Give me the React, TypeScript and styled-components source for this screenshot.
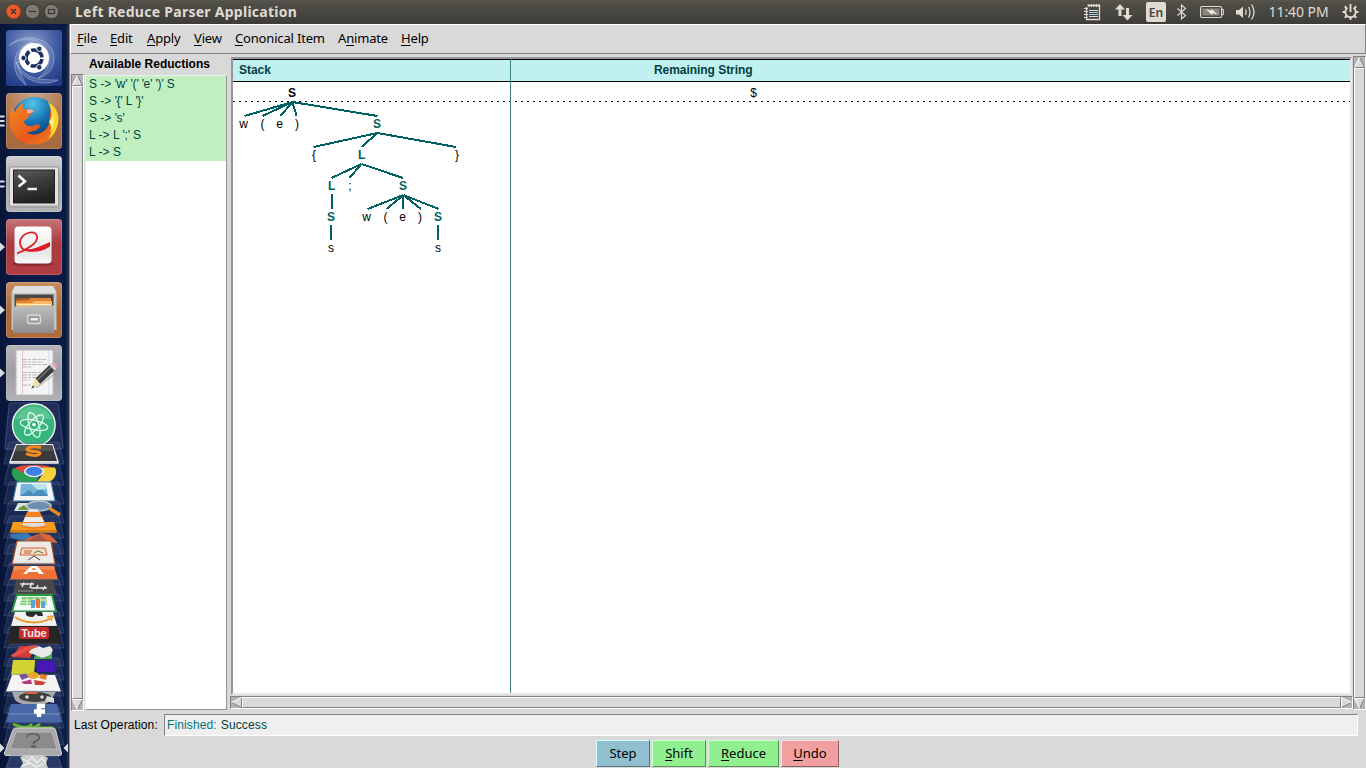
import React from 'react';
import styled, { createGlobalStyle, css } from 'styled-components';

const GlobalStyle = createGlobalStyle`
  * { box-sizing: border-box; }
  html, body { margin: 0; padding: 0; overflow: hidden; }
  body { background: #d9d9d9; }
`;

const helvetica = '"Liberation Sans", Arial, sans-serif';
const uiFont = '"Noto Sans", sans-serif';

const Desktop = styled.div`
  width: 1366px;
  height: 768px;
  display: flex;
  flex-direction: column;
  overflow: hidden;
  background: #d9d9d9;
`;

/* ---------- top panel ---------- */

const TopPanel = styled.header`
  height: 24px;
  flex: none;
  display: flex;
  align-items: center;
  background: linear-gradient(#5a5850 0, #504f48 2px, #3d3c38 100%);
  color: #dfdbd2;
`;

const WindowButtons = styled.div`
  display: flex;
  gap: 3px;
  padding: 0 0 2px 5px;
  width: 75px;
`;

const Title = styled.div`
  flex: 1;
  font: bold 14px/24px ${uiFont};
  letter-spacing: 0.27px;
  white-space: nowrap;
`;

const Indicator = styled.div<{ $w: number; $gap: number }>`
  width: ${(p) => p.$w}px;
  margin-right: ${(p) => p.$gap}px;
  height: 24px;
  flex: none;
  svg { display: block; }
`;

const Language = styled.div`
  width: 20px;
  height: 20px;
  margin-right: 11px;
  border-radius: 2px;
  background: #dfdbd2;
  color: #45443f;
  font: 600 12px/21px ${uiFont};
  text-align: center;
`;

const Clock = styled.div`
  width: 61px;
  margin-right: 12px;
  font: 14px/24px ${uiFont};
  letter-spacing: -0.05px;
  text-indent: -0.5px;
  white-space: nowrap;
`;

/* ---------- launcher ---------- */

const Workspace = styled.div`
  flex: 1;
  display: flex;
  min-height: 0;
`;

const Launcher = styled.nav`
  width: 69px;
  flex: none;
  display: flex;
  flex-direction: column;
  background: linear-gradient(90deg, #081538 0, #0a1c4b 30%, #0a1b48 96%, #2a3248 98%, #23293a 100%);
`;

const Tiles = styled.div`
  display: flex;
  flex-direction: column;
  gap: 7px;
  padding-top: 6px;
`;

const TileRow = styled.div`
  display: flex;
  align-items: center;
  height: 56px;
`;

const Marks = styled.div`
  width: 6px;
  height: 56px;
  svg { display: block; }
`;

const Tile = styled.div<{ $bg: string }>`
  width: 56px;
  height: 56px;
  border-radius: 4px;
  overflow: hidden;
  background: ${(p) => p.$bg};
  box-shadow: inset 0 0 0 1px rgba(255, 255, 255, 0.16);
  svg { display: block; }
`;

/* ---------- application window ---------- */

const AppWindow = styled.main`
  flex: 1;
  display: flex;
  flex-direction: column;
  min-width: 0;
  border-left: 1px solid #8a8a8a;
  background: #d9d9d9;
`;

const MenuBar = styled.div`
  height: 30px;
  flex: none;
  display: flex;
  gap: 13px;
  padding-left: 6px;
  border: 1px solid #fff;
  border-right-color: #828282;
  border-bottom-color: #828282;
  font: 13px/26px ${uiFont};
  color: #000;
`;

const MenuItem = styled.span<{ $w: number }>`
  width: ${(p) => p.$w}px;
  white-space: nowrap;
  letter-spacing: -0.17px;
  u { text-underline-offset: 2px; text-decoration-thickness: 1px; }
`;

const Panes = styled.div`
  height: 657px;
  flex: none;
  display: flex;
  padding-top: 2px;
`;

const ReductionsPane = styled.section`
  width: 160px;
  flex: none;
  padding-left: 1px;
`;

const PaneTitle = styled.div`
  height: 18px;
  padding-left: 18px;
  font: bold 12px/16px ${helvetica};
  white-space: nowrap;
`;

const ListRow = styled.div`
  display: flex;
  gap: 1px;
`;

const ListBox = styled.div`
  width: 142px;
  height: 635px;
  margin-top: 1px;
  border: 1px solid #f0f0f0;
  border-right: 1px solid #969696;
  border-bottom: 1px solid #969696;
  background: #fff;
`;

const Reduction = styled.div`
  height: 17px;
  padding-left: 3px;
  background: #c0f0c0;
  color: #004040;
  font: 12px/17px ${helvetica};
  white-space: pre;
`;

const Quote = styled.span`
  letter-spacing: -0.4px;
`;

const ParserPane = styled.section`
  flex: 1;
  display: flex;
  min-width: 0;
`;

const CanvasColumn = styled.div`
  width: 1123px;
  display: flex;
  flex-direction: column;
`;

const Canvas = styled.div`
  height: 638px;
  margin: 1px;
  display: flex;
  background: #fff;
  border: 2px solid #969696;
  border-right-color: #e8e8e8;
  border-bottom-color: #e8e8e8;
`;

const CanvasPart = styled.div<{ $w?: number }>`
  ${(p) => (p.$w ? css`width: ${p.$w}px; flex: none; border-right: 1px solid #408080;` : css`flex: 1;`)}
  min-width: 0;
`;

const CanvasHeader = styled.div<{ $indent: number }>`
  height: 23px;
  padding-left: ${(p) => p.$indent}px;
  border-top: 1px solid #000;
  border-bottom: 1px solid #000;
  background: #c0f0f0;
  color: #004040;
  font: bold 12px/21px ${helvetica};
  letter-spacing: -0.05px;
  white-space: nowrap;
`;

const Drawing = styled.svg`
  display: block;
`;

const NodeText = styled.text<{ $kind?: 'root' | 'inner' }>`
  font-family: ${helvetica};
  font-size: 12px;
  font-weight: ${(p) => (p.$kind ? 'bold' : 'normal')};
  fill: ${(p) => (p.$kind === 'inner' ? '#006060' : '#000')};
  text-anchor: middle;
`;

/* ---------- scrollbars ---------- */

const Bar = styled.div<{ $vertical?: boolean; $length: number }>`
  display: flex;
  flex: none;
  flex-direction: ${(p) => (p.$vertical ? 'column' : 'row')};
  width: ${(p) => (p.$vertical ? 13 : p.$length)}px;
  height: ${(p) => (p.$vertical ? p.$length : 13)}px;
  background: #b3b3b3;
  border: 1px solid #828282;
  border-right-color: #fff;
  border-bottom-color: #fff;
  svg { display: block; flex: none; }
`;

const Thumb = styled.div`
  flex: 1;
  background: #d9d9d9;
  border: 1px solid #fff;
  border-right-color: #828282;
  border-bottom-color: #828282;
`;

/* ---------- bottom ---------- */

const StatusRow = styled.div`
  height: 25px;
  flex: none;
  display: flex;
  padding: 3px 8px 0 4px;
  font: 12px/23px ${helvetica};
  letter-spacing: 0.12px;
`;

const StatusLabel = styled.div`
  width: 90px;
  white-space: nowrap;
`;

const StatusField = styled.div`
  flex: 1;
  height: 22px;
  padding-left: 2px;
  background: #efefef;
  border: 1px solid #828282;
  border-right-color: #fff;
  border-bottom-color: #fff;
  color: #004040;
  line-height: 21px;
  span { color: #007878; margin-right: 0.6px; }
`;

const ButtonRow = styled.div`
  display: flex;
  gap: 2px;
  padding: 4px 0 0 526px;
`;

const Button = styled.div<{ $w: number; $bg: string; $light: string; $dark: string }>`
  width: ${(p) => p.$w}px;
  height: 27px;
  background: ${(p) => p.$bg};
  border: 1px solid ${(p) => p.$light};
  border-right-color: ${(p) => p.$dark};
  border-bottom-color: ${(p) => p.$dark};
  font: 13px/25px ${uiFont};
  text-align: center;
  color: #000;
  u { text-underline-offset: 2px; text-decoration-thickness: 1px; }
`;

type Dir = 'up' | 'down' | 'left' | 'right';

const Arrow = ({ dir }: { dir: Dir }) => {
  const shapes: Record<Dir, [string, string, string]> = {
    up: ['5.5,0.5 0.5,10.5 10.5,10.5', 'M5.5 .5L.5 10.5', 'M5.5 .5L10.5 10.5H.5'],
    down: ['5.5,10.5 0.5,.5 10.5,.5', 'M5.5 10.5L.5 .5H10.5', 'M10.5 .5L5.5 10.5'],
    left: ['0.5,5.5 10.5,.5 10.5,10.5', 'M10.5 .5L.5 5.5', 'M10.5 .5V10.5L.5 5.5'],
    right: ['10.5,5.5 .5,.5 .5,10.5', 'M.5 10.5V.5L10.5 5.5', 'M.5 10.5L10.5 5.5'],
  };
  const [body, light, dark] = shapes[dir];
  return (
    <svg width="11" height="11" viewBox="0 0 11 11">
      <polygon points={body} fill="#d9d9d9" />
      <path d={dark} fill="none" stroke="#828282" />
      <path d={light} fill="none" stroke="#fff" />
    </svg>
  );
};

const Scrollbar = ({ vertical, length }: { vertical?: boolean; length: number }) => (
  <Bar $vertical={vertical} $length={length}>
    <Arrow dir={vertical ? 'up' : 'left'} />
    <Thumb />
    <Arrow dir={vertical ? 'down' : 'right'} />
  </Bar>
);

/* ---------- parse tree ---------- */

const edges: [number, number, number, number][] = [
  [292.4, 102, 244.5, 116], [292.4, 102, 262.5, 116], [292.4, 102, 280.5, 116], [292.4, 102, 296.6, 116], [292.4, 102, 377.5, 116],
  [377.4, 133, 313.5, 147], [377.4, 133, 361.5, 147], [377.4, 133, 456, 147],
  [361.4, 164, 331.5, 178], [361.4, 164, 349.5, 178], [361.4, 164, 403, 178],
  [332, 194, 332, 209], [331, 225, 331, 240],
  [403.4, 195, 367.5, 209], [403.4, 195, 386.5, 209], [403, 195, 403, 209], [403.4, 195, 421, 209], [403.4, 195, 438.6, 209],
  [438, 225, 438, 240],
];

const nodes: [string, number, number, ('root' | 'inner')?][] = [
  ['S', 292, 97, 'root'],
  ['w', 243.5, 128], ['(', 262.5, 128], ['e', 279.5, 128], [')', 297, 128], ['S', 377, 128, 'inner'],
  ['{', 314, 159], ['L', 361.6, 159, 'inner'], ['}', 457, 159],
  ['L', 331.6, 190, 'inner'], [';', 350, 190], ['S', 403, 190, 'inner'],
  ['S', 331, 221, 'inner'], ['w', 366.5, 221], ['(', 385.5, 221], ['e', 402.5, 221], [')', 420, 221], ['S', 438, 221, 'inner'],
  ['s', 331, 252], ['s', 438, 252],
];

const ParseTree = () => (
  <Drawing width="277" height="180" viewBox="233 82 277 180">
    <path d="M233 101.5H510" stroke="#000" strokeDasharray="2 4" />
    <g stroke="#006060" strokeWidth="2" shapeRendering="crispEdges">
      {edges.map(([x1, y1, x2, y2], i) => <line key={i} x1={x1} y1={y1} x2={x2} y2={y2} />)}
    </g>
    {nodes.map(([t, x, y, kind], i) => <NodeText key={i} x={x} y={y} $kind={kind}>{t}</NodeText>)}
  </Drawing>
);

/* ---------- launcher icons ---------- */

const UbuntuIcon = () => (
  <svg width="56" height="56" viewBox="0 0 56 56">
    <defs>
      <radialGradient id="dash" cx=".45" cy=".25" r=".85">
        <stop offset="0" stopColor="#8a9cc8" /><stop offset=".55" stopColor="#3e5ba3" /><stop offset="1" stopColor="#213a85" />
      </radialGradient>
    </defs>
    <rect width="56" height="56" rx="4" fill="url(#dash)" />
    <g fill="#b9c7e6" fillOpacity=".22" stroke="#c4d0ea" strokeOpacity=".5" strokeWidth=".9">
      <path d="M3 16C14 3 44 5 48 25C49 38 42 46 32 48C44 40 45 28 41 20C34 8 15 6 3 16Z" />
      <path d="M20 55C3 43 5 16 27 12C14 18 10 28 13 38C15 46 18 51 20 55Z" />
      <path d="M52 50C37 58 13 50 10 31C15 43 24 48 34 49C42 50 48 50 52 50Z" />
    </g>
    <circle cx="28" cy="28" r="15" fill="#fff" />
    <circle cx="28" cy="28" r="8" fill="none" stroke="#1c2f62" strokeWidth="3.6" strokeDasharray="14.8 2" strokeDashoffset="-1" />
    <g fill="#1c2f62" stroke="#fff" strokeWidth=".9">
      <circle cx="17.5" cy="28" r="2.7" /><circle cx="33.3" cy="18.8" r="2.7" /><circle cx="33.3" cy="37.2" r="2.7" />
    </g>
  </svg>
);

const FirefoxIcon = () => (
  <svg width="56" height="56" viewBox="0 0 56 56">
    <defs>
      <radialGradient id="globe" cx=".45" cy=".15" r=".8">
        <stop offset="0" stopColor="#55c4e8" /><stop offset=".5" stopColor="#1673b5" /><stop offset="1" stopColor="#0b2e66" />
      </radialGradient>
      <linearGradient id="fox" x1="0" y1="0" x2="1" y2="1">
        <stop offset="0" stopColor="#f58a20" /><stop offset=".6" stopColor="#e8581b" /><stop offset="1" stopColor="#f08a1c" />
      </linearGradient>
    </defs>
    <circle cx="28.500" cy="27" r="23" fill="url(#globe)" />
    <path d="M45 11C53 18 54 30 49 40C42 52 25 55 13 47C4 40 1 28 6 15L9 19C10 16 13 12 17 10C16 13 17 15 19 17C23 15 27 17 28 18C27 20 24 21 23 23C22 26 18 27 18 29C20 34 25 34 29 32C33 31 35 32 34 34C30 39 24 38 21 40C31 44 41 39 43 30C44 22 45 16 45 11Z" fill="url(#fox)" />
    <path d="M42 9C51 14 55 24 51 34C49 40 46 43 42 46C47 38 47 34 44 31C47 23 45 15 42 9Z" fill="#fbd52b" />
    <path d="M47 21C49 27 48 34 44 40C46 34 45 31 43 29Z" fill="#fff07a" />
    <path d="M21 17C24 16 27 17 28 18C25 21 23 20 21 20Z" fill="#f5b19a" />
  </svg>
);

const TerminalIcon = () => (
  <svg width="56" height="56" viewBox="0 0 56 56">
    <defs>
      <linearGradient id="screen" x1="0" y1="0" x2="0.3" y2="1">
        <stop offset="0" stopColor="#5b5b5b" /><stop offset=".5" stopColor="#3b3b3b" /><stop offset="1" stopColor="#222" />
      </linearGradient>
    </defs>
    <rect x="3.500" y="11" width="49" height="40" rx="2" fill="#e3e3e3" stroke="#888" strokeWidth=".8" />
    <rect x="7.500" y="14" width="41" height="33" fill="url(#screen)" stroke="#202020" />
    <path d="M12.500 19.500L19 25.500L12.500 30.500" fill="none" stroke="#fff" strokeWidth="2.500" />
    <path d="M21.500 33H31" stroke="#eee" strokeWidth="2.300" />
    <path d="M5 50H51" stroke="#999" />
  </svg>
);

const PdfIcon = () => (
  <svg width="56" height="56" viewBox="0 0 56 56">
    <defs><linearGradient id="pdfpage" x1="0" y1="0" x2="0" y2="1"><stop offset="0" stopColor="#fff" /><stop offset=".7" stopColor="#e6e6e6" /><stop offset="1" stopColor="#fafafa" /></linearGradient></defs>
    <ellipse cx="27" cy="45" rx="21" ry="2" fill="#6d1f24" opacity=".6" />
    <rect x="8.500" y="7.500" width="37" height="37" rx="4" fill="url(#pdfpage)" />
    <path d="M11 34.500C20 31 33 24 31 17C29 10 15 14 14 23C14 34 26 34 44 25" fill="none" stroke="#d81e26" strokeWidth="1.800" />
    <path d="M18 30C25 32 35 27 44 23V27.500C36 33 24 35 18 30Z" fill="#d81e26" />
  </svg>
);

const FilesIcon = () => (
  <svg width="56" height="56" viewBox="0 0 56 56">
    <defs><linearGradient id="drawer" x1="0" y1="0" x2="0" y2="1"><stop offset="0" stopColor="#bdbdbd" /><stop offset="1" stopColor="#8e8e8e" /></linearGradient></defs>
    <path d="M9 4H47L50.500 10V48H5.500V10Z" fill="#c4c4c2" />
    <path d="M9 4H47L50 11H6Z" fill="#dededc" />
    <rect x="8.500" y="12.500" width="39" height="14" fill="#474747" />
    <path d="M9.500 19L11 16H45V25H9.500Z" fill="#a9571f" />
    <path d="M10 19L23 18L25 16H45V26H10Z" fill="#e08436" />
    <path d="M10 21H26L28 19H46V26H10Z" fill="#f6b862" />
    <path d="M11 22.500H45" stroke="#fff0c8" strokeWidth="1" />
    <path d="M7 24.500H24L26 23.500H48V51H7Z" fill="url(#drawer)" />
    <rect x="21.500" y="33" width="13" height="8.500" rx="2" fill="#aaa" stroke="#d8d8d8" strokeWidth="1.300" />
    <rect x="24" y="35.500" width="8.500" height="3.500" fill="#eee" stroke="#777" strokeWidth=".7" />
  </svg>
);

const EditorIcon = () => (
  <svg width="56" height="56" viewBox="0 0 56 56">
    <rect x="10" y="5" width="37" height="45" fill="#f4f4f4" stroke="#b9b9b9" strokeWidth="1" />
    <path d="M16.500 5V50" stroke="#e9b7bb" strokeWidth=".8" /><path d="M43 5V50" stroke="#c9d3ec" strokeWidth=".8" />
    <path d="M16 14.500H40M16 17H37M16 19.500H41M16 22H25M16 27.500H38M16 30H36M16 32.500H32M16 35H24M16 40H26" stroke="#b4b4b4" strokeWidth=".9" strokeDasharray="5 1 3 1" />
    <path d="M30 43L51 27" stroke="#999" strokeWidth="2" opacity=".5" />
    <path d="M29.500 33.500L43.500 20L48.500 25.500L34 39Z" fill="#3b3b3b" />
    <path d="M31 35.500L45.500 21.500" stroke="#777" strokeWidth="1.300" />
    <path d="M43.500 20L45.500 18L50.500 23.500L48.500 25.500Z" fill="#d0d0d0" />
    <path d="M45.500 18C49 16 53 20 50.500 23.500Z" fill="#e29ac4" />
    <path d="M29.500 33.500L34 39L25.500 43.500Z" fill="#efe2a0" /><path d="M27 40.500L28.300 42L25.300 43.700Z" fill="#222" />
  </svg>
);

const FoldedTile = ({ y }: { y: number }) => (
  <path d={`M11 ${y}H57Q59 ${y} 59.5 ${y + 2}L64 ${y + 22}H4L8.500 ${y + 2}Q9 ${y} 11 ${y}Z`} fill="#51608a" fillOpacity=".22" stroke="#7d89a8" strokeOpacity=".35" strokeWidth=".8" />
);

const FoldedStack = () => (
  <svg width="69" height="367" viewBox="0 401 69 367">
    <path d="M11 403H56Q58 403 58.500 405L63 447Q63 449 61 449H6Q4 449 5 447L9 405Q9 403 11 403Z" fill="#1f2d58" stroke="#465580" strokeWidth=".8" />
    <circle cx="33.800" cy="425" r="21.300" fill="#36b67c" stroke="#e9efec" strokeWidth="1.500" />
    <path d="M15 419A20 20 0 0 1 52 419Z" fill="#7fd3ab" opacity=".5" />
    <g fill="none" stroke="#e8fff4" strokeWidth="1.200">
      <ellipse cx="34" cy="425" rx="14" ry="4.800" transform="rotate(12 34 425)" />
      <ellipse cx="34" cy="425" rx="13" ry="4.800" transform="rotate(72 34 425)" />
      <ellipse cx="34" cy="425" rx="13" ry="4.800" transform="rotate(132 34 425)" />
    </g>
    <circle cx="34" cy="424.500" r="1.800" fill="#fff" />

    <FoldedTile y={442} />
    <path d="M16 444H53L59 462.500L58 464H10L9 462.500Z" fill="#e6e6e6" />
    <path d="M17 445H52L57 461H11Z" fill="#3a3a3a" /><path d="M17 445H52L54 451H15Z" fill="#555" />
    <path d="M41 447.500C34 446 27 447 27 449.500S41 451 40 453.500S31 456 26 453.500" fill="none" stroke="#f28a1e" strokeWidth="3" />

    <FoldedTile y={463} />
    <path d="M13 471C15 466 21 465 34 465S53 466 56 472L34 475Z" fill="#dd4b3d" />
    <path d="M13 468C9 477 17 485 35 485.500L39 477L22 472Z" fill="#2aa052" />
    <path d="M42 467.500H55C60 478 48 485.500 34 485.500L43 474Z" fill="#f9cf3c" />
    <ellipse cx="34" cy="471.500" rx="10" ry="5.700" fill="#f2f2f2" /><ellipse cx="34" cy="471.300" rx="8.300" ry="4.600" fill="#3f7fe8" />

    <FoldedTile y={482} />
    <path d="M17 482H51L55 501H13Z" fill="#f2f4f5" stroke="#3b8aa6" />
    <path d="M21 484H46L48 496H20Z" fill="#74b5d9" /><path d="M20 496L29 490L34 494L40 487L48 496Z" fill="#4b8dba" />
    <path d="M31 484H46L47 489L38 490Z" fill="#bfe0ed" />
    <FoldedTile y={501} />
    <path d="M18 503H34L36 511H14Z" fill="#dbe5dc" /><path d="M19 508L24 505L29 510H18Z" fill="#6b9647" />
    <ellipse cx="39" cy="506" rx="12" ry="4.800" fill="#6b8fae" stroke="#b2bdc6" strokeWidth="1.800" />
    <path d="M49 508L60 515" stroke="#e58b26" strokeWidth="3.500" />
    <FoldedTile y={516} />
    <path d="M13 522H54L57 532H10Z" fill="#f89b1d" /><path d="M10 530H57L56 533H11Z" fill="#d97b0a" />
    <path d="M27 512H40L47 527Q34 531 21 527Z" fill="#f5821f" />
    <path d="M25 517H42L44 522H23Z" fill="#eee" /><path d="M22 525L23 523H45L46 525Q34 529 22 525Z" fill="#ddd" />
    <path d="M28 512H39L38 509H29Z" fill="#ddd" />

    <FoldedTile y={532} />
    <path d="M10 534L27 533L34 538L24 541L11 538Z" fill="#3b77b5" /><path d="M19 547L28 538L41 533L50 535L58 543L46 542L38 547Z" fill="#dc6635" />
    <path d="M25 542L40 534L48 542L34 547Z" fill="#a8544b" />
    <FoldedTile y={544} />
    <path d="M17 541H51L55 564H12Z" fill="#eeeae5" stroke="#a0522d" strokeWidth="1.200" />
    <path d="M22 548H45L47 555H20Z" fill="#f6d9c8" stroke="#c8643c" /><path d="M24 551H32M24 553H31" stroke="#bf5e31" /><path d="M34 553L38 551L43 553" stroke="#3f8d42" fill="none" />
    <path d="M34 556L28 560M34 556L40 560" stroke="#444" />
    <FoldedTile y={563} />
    <path d="M14 566H54L58 579.500H10Z" fill="#ef7036" /><path d="M14 566H54L55 570H13Z" fill="#f58a50" />
    <path d="M31 566H37L44 574H39L37.500 572H29L26.500 574H23ZM31 570H36L34.500 568H33Z" fill="#fff" fillRule="evenodd" />
    <FoldedTile y={579} />
    <path d="M16 580H53L57 594.500H13Z" fill="#484848" />
    <path d="M20 584H34M24 582.500L22 587M32 582.500L30 588M31 588H47M38 585L36 589M45 586L43 590" stroke="#e7e7e7" strokeWidth="1.500" fill="none" />
    <path d="M18 591H33" stroke="#aaa" strokeWidth=".8" />
    <FoldedTile y={594} />
    <path d="M17 595H52L56 611.500H12Z" fill="#f4faf4" stroke="#239c3b" strokeWidth="1.800" />
    <path d="M22 597H46L47 605H20Z" fill="#7ec977" /><path d="M21 600H47M21 603H47M27 597V605M34 597V605M40 597V605" stroke="#e8f8e5" />
    <path d="M31 608V600H35V608ZM41 608V602H45V608Z" fill="#57a4d6" /><path d="M36 608V599H40V608Z" fill="#e47838" />
    <FoldedTile y={611} />
    <path d="M15 612H53L57 626H11Z" fill="#f0f0ee" />
    <path d="M26 612H42L43 616H38L36 614L33 617Q24 617 26 612Z" fill="#2b2b2b" /><path d="M15 617C24 624 42 624 51 618" fill="none" stroke="#f09a26" strokeWidth="2" /><path d="M47 617L53 616L51 621" fill="none" stroke="#f09a26" strokeWidth="1.300" />
    <FoldedTile y={626} />
    <path d="M11 626H58L61 644H7Z" fill="#272525" />
    <rect x="19" y="627" width="30" height="12" rx="2.500" fill="#c52b2c" />
    <text x="34" y="637" textAnchor="middle" fontFamily="Liberation Sans, sans-serif" fontWeight="bold" fontSize="11" fill="#f5e5e5">Tube</text>
    <FoldedTile y={644} />
    <path d="M12 657L20 646H36L30 658Z" fill="#d33a32" /><path d="M36 650L52 648V659H34Z" fill="#4bb04d" />
    <path d="M11 655C20 650 26 645 38 645L36 648C27 650 20 656 12 657Z" fill="#e25146" />
    <path d="M29 653C29 649 36 648 39 646L43 648L50 646L53 650L50 655L42 658L36 655Z" fill="#e8e8e8" />
    <FoldedTile y={658} />
    <path d="M13 660H35L34 675H11Z" fill="#d3d335" /><path d="M37 661H54L56 672H37Z" fill="#4717ba" />
    <FoldedTile y={674} />
    <path d="M12 675H55L61 691.500H6Z" fill="#f5f5f5" />
    <ellipse cx="33.500" cy="675.500" rx="5.500" ry="3.500" fill="#eda728" />
    <path d="M19 675L26 673.500L29 677L22 680Z" fill="#7552a4" /><path d="M41 674L47 675L46 680L39 678Z" fill="#ec7d2b" />
    <path d="M21 682L31 679.500L32 684H24Z" fill="#b5387e" /><path d="M34 680L46 682L43 685H35Z" fill="#d04037" />
    <FoldedTile y={691} />
    <path d="M12 692H56L50 701C44 707 21 707 15 700Z" fill="#a9a9a9" /><ellipse cx="35" cy="697" rx="16" ry="5" fill="#404040" />
    <path d="M24 692H39L36 694H27Z" fill="#e16335" /><circle cx="27" cy="697" r="1.800" fill="#ddd" /><circle cx="42" cy="697" r="1.800" fill="#ddd" /><path d="M47 696L54 698L54 703L45 701Z" fill="#dadada" />
    <FoldedTile y={706} />
    <path d="M11 704H57L62 722.500H6Z" fill="#4767a6" /><path d="M8 714H60" stroke="#7c93bf" />
    <path d="M39 717V706H45M34 711.500H45" stroke="#fff" strokeWidth="4.500" fill="none" />
    <FoldedTile y={723} />
    <path d="M13 724C22 728 29 728 32 724M23 728C30 729 37 727 40 724M38 728H52L54 731H28" fill="none" stroke="#62b52d" strokeWidth="2.800" />
    <path d="M13 729.500Q14 728 16 728H53Q55 728 55.500 730L61.500 753Q62 755 60 755.500H6Q4 755 4.500 753Z" fill="#a9a9a9" stroke="#d5d5d5" />
    <path d="M16 732H52L57 749H10Z" fill="#8b8b8b" stroke="#b8b8b8" />
    <path d="M27 737.500C28 732 40 733 39.500 738C39 741 33.500 740 33.500 744" fill="none" stroke="#5d5d5d" strokeWidth="1.600" /><ellipse cx="33.500" cy="746.500" rx="2.700" ry="1.200" fill="#5d5d5d" />
    <path d="M10 756H58L62 768H6Z" fill="#2b3a65" stroke="#56658b" strokeOpacity=".6" />
    <path d="M20 757L26 755H43L48 758L46 763L48 768H20L23 763Z" fill="#c9cdcb" />
    <path d="M23 759L28 762L32 757L37 763L42 758L46 764M22 766L30 763L36 767L43 764" fill="none" stroke="#f4f4f4" strokeWidth="1.200" />
    <path d="M0 743.500L4.500 748L0 752.500ZM68 743.500L63.500 748L68 752.500Z" fill="#dedede" />
  </svg>
);

const launcherTiles: { icon: React.ReactNode; bg: string; marks: number }[] = [
  { icon: <UbuntuIcon />, bg: '#405da4', marks: 0 },
  { icon: <FirefoxIcon />, bg: 'radial-gradient(circle at 50% 0, #c8a58b, #ad7045 60%, #a4683e)', marks: 3 },
  { icon: <TerminalIcon />, bg: 'linear-gradient(#d0d0d2, #a9a9ac 45%, #b5b5b8)', marks: 2 },
  { icon: <PdfIcon />, bg: 'linear-gradient(#c57477, #a93a40 45%, #b03d43)', marks: 1 },
  { icon: <FilesIcon />, bg: 'linear-gradient(#c58f62, #a96a38 50%, #ae6c3a)', marks: 1 },
  { icon: <EditorIcon />, bg: 'linear-gradient(#b7b7bb, #9c9ca2 45%, #b1b1b6)', marks: 1 },
];

const markPaths = [
  '',
  'M0 23.500L5 28L0 32.500Z',
  'M0 24.500H4L5 25.500L4 26.500H0ZM0 29.500H4L5 30.500L4 31.500H0Z',
  'M0 22.500H4L5 23.500L4 24.500H0ZM0 27H4L5 28L4 29H0ZM0 31.500H4L5 32.500L4 33.500H0Z',
];

/* ---------- top panel icons ---------- */

const windowButtons = [
  { fill: '#ea5b2f', stroke: '#8c3a20', glyph: 'M6 6L11 11M11 6L6 11' },
  { fill: '#7d7a72', stroke: '#33322f', glyph: 'M5 8.500H12' },
  { fill: '#7d7a72', stroke: '#33322f', glyph: 'M5.500 6.500H11.500V10.500H5.500Z' },
];

const Panel = () => (
  <TopPanel>
    <WindowButtons>
      {windowButtons.map((b, i) => (
        <svg key={i} width="16" height="16" viewBox="0 0 16 16">
          <circle cx="8.500" cy="8.500" r="7.300" fill={b.fill} stroke={b.stroke} strokeWidth=".9" />
          <path d={b.glyph} fill="none" stroke="#35332e" strokeWidth="1.100" />
        </svg>
      ))}
    </WindowButtons>
    <Title>Left Reduce Parser Application</Title>
    <Indicator $w={17} $gap={14}>
      <svg width="17" height="24" viewBox="0 0 17 24" fill="none" stroke="#dfdbd2">
        <path d="M3.500 5.500H15.500V19.500H2.500V7" strokeWidth="1.300" />
        <path d="M5 4V7M7.500 4V7M10 4V7M12.500 4V7M15 4V7M0 8.500H4M0 11.500H4M0 14.500H4M0 17.500H4" strokeWidth="1.200" />
        <path d="M5 10.500H14M5 16.500H14" /><path d="M5 12.500H14M5 14.500H14" stroke="#9ccce0" />
      </svg>
    </Indicator>
    <Indicator $w={18} $gap={13}>
      <svg width="18" height="24" viewBox="0 0 18 24" fill="#dfdbd2">
        <path d="M5 4L10 9.500H6.500V16H3.500V9.500H0Z" /><path d="M12.500 20.500L7.500 15H11V8H14V15H17.500Z" />
      </svg>
    </Indicator>
    <Language>En</Language>
    <Indicator $w={10} $gap={13}>
      <svg width="10" height="24" viewBox="0 0 10 24" fill="none" stroke="#dfdbd2" strokeWidth="1.200">
        <path d="M.5 8.500L8.500 15.500L4.500 19V5L8.500 8.500L.5 15.500" />
      </svg>
    </Indicator>
    <Indicator $w={24} $gap={12}>
      <svg width="24" height="24" viewBox="0 0 24 24">
        <rect x=".6" y="6.500" width="21" height="11" rx="1.500" fill="none" stroke="#dfdbd2" strokeWidth="1.200" />
        <rect x="2.500" y="8.500" width="17" height="7" fill="#8b8880" />
        <path d="M22 9.500H23.400V14.500H22" fill="none" stroke="#dfdbd2" /><path d="M6 9L11.500 11L11 8.500L17.500 14.500L12 13L12.500 15.500Z" fill="#f3efe6" />
      </svg>
    </Indicator>
    <Indicator $w={20} $gap={13}>
      <svg width="20" height="24" viewBox="0 0 20 24" fill="none" stroke="#dfdbd2" strokeWidth="1.300">
        <path d="M0 10H3L7 6.500V18L3 14.500H0Z" fill="#dfdbd2" stroke="none" />
        <path d="M9.500 9.500Q11 12 9.500 15" /><path d="M12.500 7Q15.500 12 12.500 17.500" /><path d="M15.500 4.500Q20.500 12 15.500 19.500" />
      </svg>
    </Indicator>
    <Clock>11:40 PM</Clock>
    <Indicator $w={17} $gap={7}>
      <svg width="17" height="24" viewBox="0 0 17 24" fill="none" stroke="#dfdbd2">
        <path d="M5.500 7.800A5.200 5.200 0 1 0 11.500 7.800" strokeWidth="1.900" />
        <path d="M8.500 4V12" strokeWidth="1.900" />
        <path d="M.5 12H3M14 12H16.500M8.500 17.500V20M2.800 6.300L4.500 8M14.200 6.300L12.500 8M2.800 17.700L4.500 16M14.200 17.700L12.500 16" strokeWidth="2" />
      </svg>
    </Indicator>
  </TopPanel>
);

const menu: [string, string, string, number][] = [
  ['', 'F', 'ile', 20], ['', 'E', 'dit', 24], ['', 'A', 'pply', 34], ['', 'V', 'iew', 28],
  ['', 'C', 'ononical Item', 90], ['A', 'n', 'imate', 50], ['', 'H', 'elp', 28],
];

const reductions = ["S -> 'w' '(' 'e' ')' S", "S -> '{' L '}'", "S -> 's'", "L -> L ';' S", 'L -> S'];

export default function App() {
  return (
    <Desktop>
      <GlobalStyle />
      <Panel />
      <Workspace>
        <Launcher>
          <Tiles>
            {launcherTiles.map((t, i) => (
              <TileRow key={i}>
                <Marks><svg width="6" height="56"><path d={markPaths[t.marks]} fill="#d9dce2" /></svg></Marks>
                <Tile $bg={t.bg}>{t.icon}</Tile>
              </TileRow>
            ))}
          </Tiles>
          <FoldedStack />
        </Launcher>
        <AppWindow>
          <MenuBar>
            {menu.map(([pre, key, post, w]) => <MenuItem key={pre + key + post} $w={w}>{pre}<u>{key}</u>{post}</MenuItem>)}
          </MenuBar>
          <Panes>
            <ReductionsPane>
              <PaneTitle>Available Reductions</PaneTitle>
              <ListRow>
                <Scrollbar vertical length={637} />
                <ListBox>
                  {reductions.map((r) => (
                    <Reduction key={r}>
                      {r.split(/(')/).map((part, i) => (part === "'" ? <Quote key={i}>{part}</Quote> : part))}
                    </Reduction>
                  ))}
                </ListBox>
              </ListRow>
            </ReductionsPane>
            <ParserPane>
              <CanvasColumn>
                <Canvas>
                  <CanvasPart $w={278}>
                    <CanvasHeader $indent={6}>Stack</CanvasHeader>
                    <ParseTree />
                  </CanvasPart>
                  <CanvasPart>
                    <CanvasHeader $indent={143}>Remaining String</CanvasHeader>
                    <Drawing width="839" height="30" viewBox="511 82 839 30">
                      <path d="M515 101.500H1350" stroke="#000" strokeDasharray="2 4" />
                      <NodeText x="753.500" y="97">$</NodeText>
                    </Drawing>
                  </CanvasPart>
                </Canvas>
                <Scrollbar length={1123} />
              </CanvasColumn>
              <Scrollbar vertical length={654} />
            </ParserPane>
          </Panes>
          <StatusRow>
            <StatusLabel>Last Operation:</StatusLabel>
            <StatusField><span>Finished:</span> Success</StatusField>
          </StatusRow>
          <ButtonRow>
            <Button $w={54} $bg="#90c0d0" $light="#d0ffff" $dark="#567380">Step</Button>
            <Button $w={54} $bg="#90f090" $light="#d0ffd0" $dark="#569056"><u>S</u>hift</Button>
            <Button $w={71} $bg="#90f090" $light="#d0ffd0" $dark="#569056"><u>R</u>educe</Button>
            <Button $w={58} $bg="#f0a0a0" $light="#ffe0e0" $dark="#906060"><u>U</u>ndo</Button>
          </ButtonRow>
        </AppWindow>
      </Workspace>
    </Desktop>
  );
}
